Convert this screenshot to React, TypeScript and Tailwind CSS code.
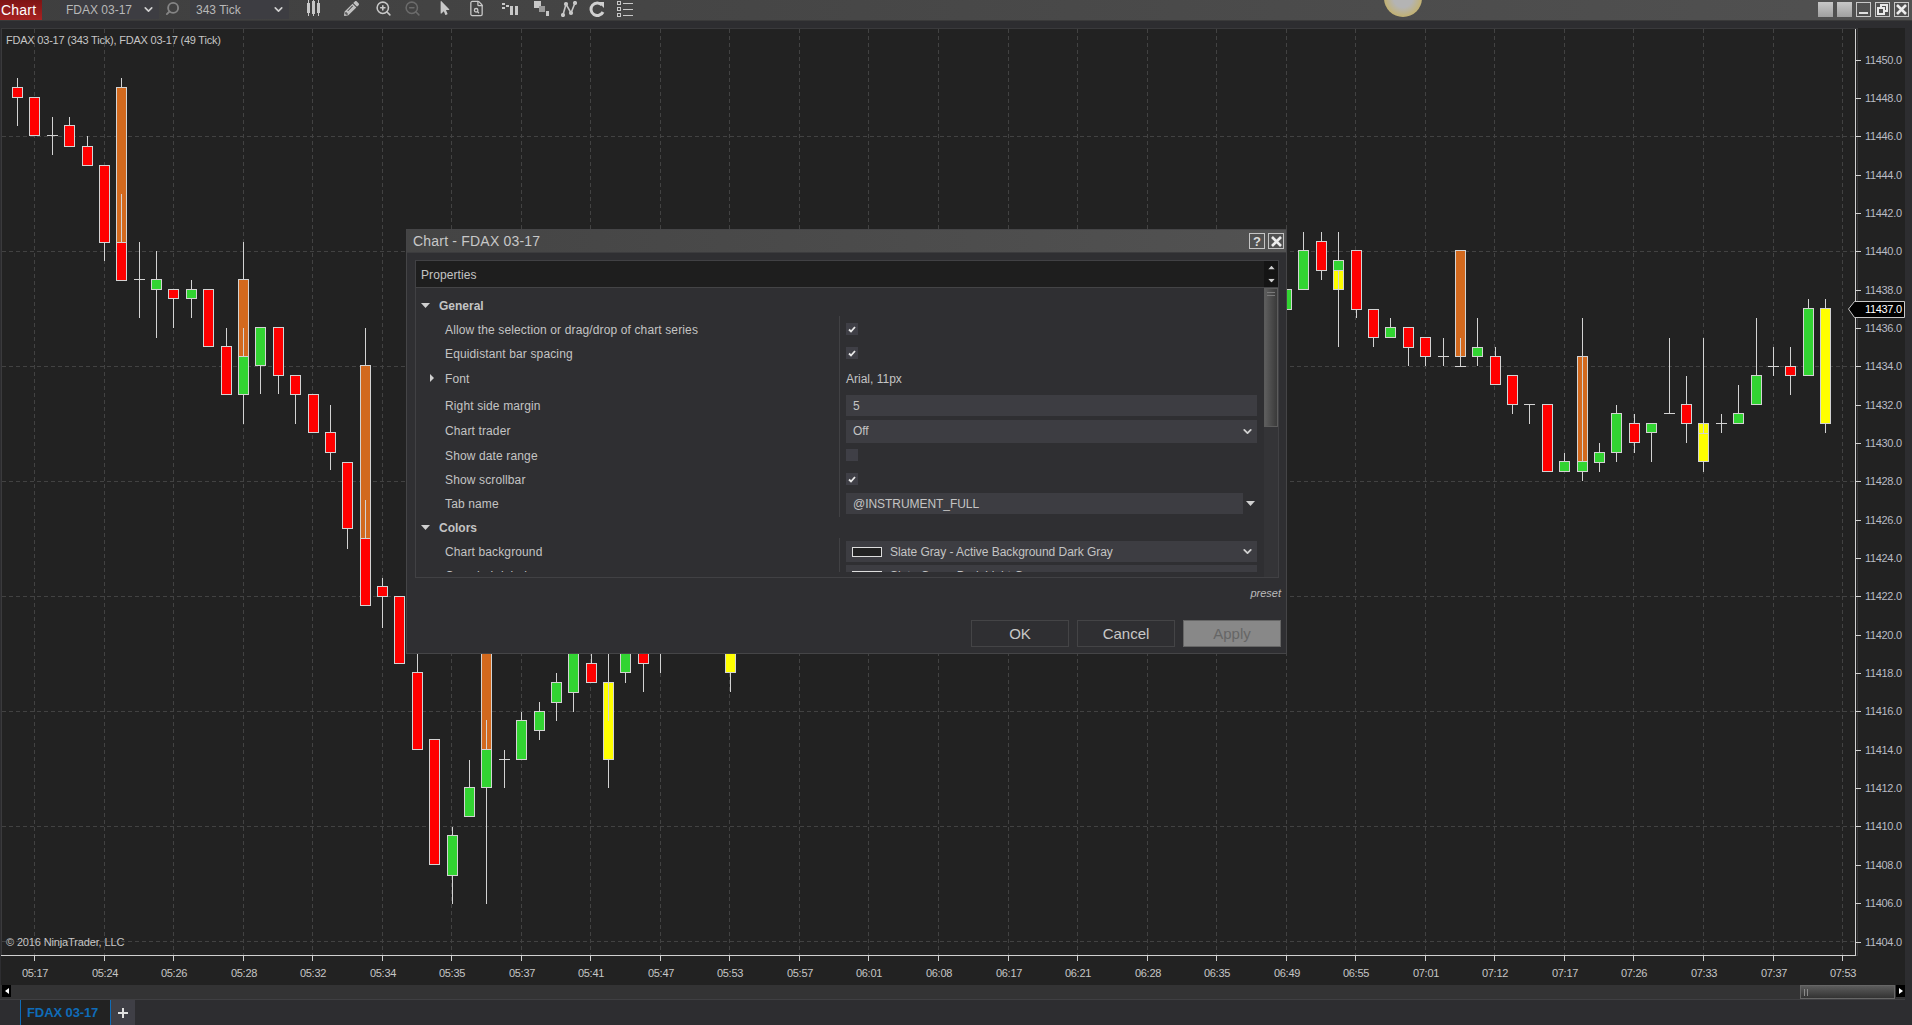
import { ReactNode } from 'react'
import { ChevronDown, FileSearch, Search, ZoomIn, ZoomOut } from 'lucide-react'
import { FaMousePointer, FaPencilAlt } from 'react-icons/fa'

const RED = '#ff0000'
const GREEN = '#32d432'
const ORANGE = '#d2691e'
const YELLOW = '#ffff00'

// n, wick top, wick bottom, body top, body bottom, colour (no colour: only a wick or a doji)
type Bar = [number, number, number, number, number, string?]

const bars: Bar[] = [
  [0, 78, 126, 87, 97, RED],
  [1, 97, 135, 97, 135, RED],
  [2, 117, 155, 135, 135],
  [3, 117, 146, 125, 146, RED],
  [4, 136, 165, 146, 165, RED],
  [5, 165, 261, 165, 242, RED],
  [6, 78, 242, 87, 242, ORANGE],
  [6, 194, 280, 242, 280, RED],
  [7, 242, 318, 279, 279],
  [8, 251, 338, 279, 289, GREEN],
  [9, 289, 328, 289, 298, RED],
  [10, 280, 318, 289, 298, GREEN],
  [11, 289, 346, 289, 346, RED],
  [12, 328, 394, 346, 394, RED],
  [13, 242, 356, 279, 356, ORANGE],
  [13, 328, 424, 356, 394, GREEN],
  [14, 327, 394, 327, 365, GREEN],
  [15, 327, 394, 327, 375, RED],
  [16, 375, 424, 375, 394, RED],
  [17, 394, 432, 394, 432, RED],
  [18, 405, 470, 432, 452, RED],
  [19, 462, 549, 462, 528, RED],
  [20, 328, 538, 365, 538, ORANGE],
  [20, 500, 605, 538, 605, RED],
  [21, 578, 628, 586, 596, RED],
  [22, 596, 663, 596, 663, RED],
  [23, 640, 749, 672, 749, RED],
  [24, 739, 864, 739, 864, RED],
  [25, 827, 904, 835, 875, GREEN],
  [26, 760, 816, 787, 816, GREEN],
  [27, 640, 749, 640, 749, ORANGE],
  [27, 720, 904, 749, 787, GREEN],
  [28, 750, 788, 759, 759],
  [29, 712, 759, 720, 759, GREEN],
  [30, 702, 740, 711, 730, GREEN],
  [31, 673, 721, 682, 702, GREEN],
  [32, 640, 712, 640, 692, GREEN],
  [33, 640, 682, 663, 682, RED],
  [34, 682, 788, 682, 759, YELLOW],
  [34, 640, 721, 640, 640],
  [35, 640, 683, 640, 672, GREEN],
  [36, 640, 692, 640, 663, RED],
  [37, 640, 673, 640, 640],
  [41, 640, 692, 640, 672, YELLOW],
  [73, 289, 309, 289, 309, GREEN],
  [74, 232, 289, 250, 289, GREEN],
  [75, 232, 280, 241, 270, RED],
  [76, 270, 289, 270, 289, YELLOW],
  [76, 232, 347, 260, 270, GREEN],
  [77, 250, 318, 250, 309, RED],
  [78, 309, 347, 309, 337, RED],
  [79, 318, 337, 327, 337, GREEN],
  [80, 327, 366, 327, 347, RED],
  [81, 337, 366, 337, 356, RED],
  [82, 338, 366, 356, 356],
  [83, 250, 356, 250, 356, ORANGE],
  [83, 338, 366, 366, 366],
  [84, 318, 366, 347, 356, GREEN],
  [85, 347, 384, 356, 384, RED],
  [86, 375, 414, 375, 404, RED],
  [87, 404, 424, 404, 404],
  [88, 404, 471, 404, 471, RED],
  [89, 453, 471, 461, 471, GREEN],
  [90, 356, 461, 356, 461, ORANGE],
  [90, 318, 481, 461, 471, GREEN],
  [91, 443, 472, 452, 462, GREEN],
  [92, 405, 462, 413, 452, GREEN],
  [93, 414, 453, 423, 442, RED],
  [94, 423, 462, 423, 432, GREEN],
  [95, 338, 413, 413, 413],
  [96, 376, 443, 404, 423, RED],
  [97, 423, 472, 423, 461, YELLOW],
  [97, 338, 433, 433, 433],
  [98, 414, 433, 423, 423],
  [99, 385, 423, 413, 423, GREEN],
  [100, 318, 404, 375, 404, GREEN],
  [101, 347, 376, 366, 366],
  [102, 347, 395, 366, 375, RED],
  [103, 299, 375, 308, 375, GREEN],
  [104, 299, 433, 308, 423, YELLOW],
]

const times = [
  '05:17', '05:24', '05:26', '05:28', '05:32', '05:34', '05:35', '05:37', '05:41',
  '05:47', '05:53', '05:57', '06:01', '06:08', '06:17', '06:21', '06:28', '06:35',
  '06:49', '06:55', '07:01', '07:12', '07:17', '07:26', '07:33', '07:37', '07:53',
]

const prices = Array.from({ length: 24 }, (_, i) => 11450 - i * 2)
const gridY = [136, 251, 366, 481, 596, 711, 826, 941]

const barX = (n: number) => Math.round(17 + 17.385 * n)
const timeX = (i: number) => Math.round(34 + 69.54 * i)
const priceY = (p: number) => Math.round(941.5 - (p - 11404) * 19.17)

function Chart() {
  return (
    <svg viewBox="0 28 1905 957" className="block h-[957px] w-[1905px] shrink-0" shapeRendering="crispEdges">
      <rect x="1" y="28" width="1904" height="957" fill="#222222" />
      <rect x="1.5" y="28.5" width="1856" height="927" fill="none" stroke="#3a3a3c" />
      {times.map((_, i) => (
        <line key={i} x1={timeX(i) + 0.5} x2={timeX(i) + 0.5} y1="29" y2="955" stroke="#424242" strokeDasharray="4 3" />
      ))}
      {gridY.map((y) => (
        <line key={y} x1="2" x2="1855" y1={y + 0.5} y2={y + 0.5} stroke="#424242" strokeDasharray="4 3" />
      ))}

      {bars.map(([n, wickTop, wickBot, bodyTop, bodyBot, color], i) => {
        const x = barX(n)
        return (
          <g key={i}>
            <line x1={x + 0.5} x2={x + 0.5} y1={wickTop} y2={wickBot} stroke="#d3d3d3" />
            {color ? (
              <rect x={x - 4.5} y={bodyTop + 0.5} width="10" height={bodyBot - bodyTop} fill={color} stroke="#d3d3d3" />
            ) : (
              <line x1={x - 5} x2={x + 6} y1={bodyTop + 0.5} y2={bodyTop + 0.5} stroke="#d3d3d3" />
            )}
          </g>
        )
      })}

      <line x1="1855.5" x2="1855.5" y1="29" y2="955" stroke="#d0d0d0" />
      <line x1="1" x2="1856" y1="955.5" y2="955.5" stroke="#d0d0d0" />
      {times.map((t, i) => (
        <g key={t}>
          <line x1={timeX(i) + 0.5} x2={timeX(i) + 0.5} y1="956" y2="961" stroke="#d0d0d0" />
          <text x={timeX(i) + 1} y="977" textAnchor="middle" className="fill-[#c6c6c6] text-[11px] tracking-[-0.3px]">{t}</text>
        </g>
      ))}
      {prices.map((p) => (
        <g key={p}>
          <line x1="1856" x2="1861" y1={priceY(p) + 0.5} y2={priceY(p) + 0.5} stroke="#d0d0d0" />
          <text x="1865" y={priceY(p) + 4} textLength="37" className="fill-[#b9bcc4] text-[11px]">{p}.0</text>
        </g>
      ))}

      <polygon points="1848.5,309 1854.5,301.5 1904.5,301.5 1904.5,317.5 1854.5,317.5" fill="#000000" stroke="#c8c8c8" shapeRendering="auto" />
      <text x="1865" y="313" textLength="37" className="fill-white text-[11px]">11437.0</text>

      <text x="6" y="44" className="fill-[#c6c6c6] text-[11px] tracking-[-0.21px]">FDAX 03-17 (343 Tick), FDAX 03-17 (49 Tick)</text>
      <text x="6" y="946" className="fill-[#c6c6c6] text-[11px] tracking-[-0.14px]">© 2016 NinjaTrader, LLC</text>
    </svg>
  )
}

function Dropdown({ label, w }: { label: string; w: string }) {
  return (
    <div className={`flex h-[19px] items-center justify-between bg-[#3d3d42] pl-[6px] pr-[4px] text-[12px] text-[#b8b8b8] ${w}`}>
      <span>{label}</span>
      <ChevronDown size={13} strokeWidth={3} className="text-[#d0d0d0]" />
    </div>
  )
}

function Toolbar() {
  return (
    <div className="relative flex h-[21px] shrink-0 items-start border-b border-[#3a3a3a] bg-gradient-to-r from-[#3f3f3f] to-[#515151]">
      <div className="flex h-[20px] w-[42px] items-center bg-gradient-to-b from-[#7e1414] to-[#a82222] pl-px text-[14px] tracking-[0.2px] text-white">Chart</div>
      <div className="ml-[18px]"><Dropdown label="FDAX 03-17" w="w-[99px]" /></div>
      <Search size={15} strokeWidth={3} className="ml-[6px] mt-px -scale-x-100 text-[#858585]" />
      <div className="ml-[10px]"><Dropdown label="343 Tick" w="w-[99px]" /></div>

      <svg viewBox="0 0 14 16" className="ml-[18px] h-[16px] w-[14px]" fill="#c8c8c8" shapeRendering="crispEdges">
        <rect x="1" y="0" width="1" height="16" />
        <rect x="0" y="3" width="3" height="10" />
        <rect x="6" y="0" width="1" height="16" />
        <rect x="5" y="1" width="3" height="13" />
        <rect x="11" y="0" width="1" height="16" />
        <rect x="10" y="3" width="3" height="10" />
      </svg>
      <FaPencilAlt size={15} className="ml-[23px] mt-px text-[#c0c0c0]" />
      <ZoomIn size={17} strokeWidth={2.2} className="ml-[16px] text-[#c8c8c8]" />
      <ZoomOut size={17} strokeWidth={2.2} className="ml-[12px] text-[#6b6b6b]" />
      <FaMousePointer size={14} className="ml-[17px] mt-px text-[#c8c8c8]" />
      <FileSearch size={17} strokeWidth={1.8} className="ml-[16px] text-[#c8c8c8]" />

      <svg viewBox="0 0 16 16" className="ml-[17px] mt-px h-[16px] w-[16px]" fill="#c8c8c8" shapeRendering="crispEdges">
        <rect x="0" y="2" width="3" height="2" />
        <rect x="4" y="4" width="3" height="2" />
        <rect x="0" y="6" width="3" height="2" />
        <rect x="8" y="5" width="3" height="9" />
        <rect x="13" y="5" width="3" height="9" />
      </svg>
      <svg viewBox="0 0 16 16" className="ml-[16px] mt-px h-[16px] w-[16px]" fill="#c8c8c8" shapeRendering="crispEdges">
        <rect x="0" y="0" width="7" height="7" />
        <rect x="5" y="5" width="6" height="6" fill="#9a9a9a" />
        <rect x="12" y="10" width="3" height="5" />
      </svg>
      <svg viewBox="0 0 16 16" className="ml-[11px] mt-px h-[16px] w-[16px]" fill="none" stroke="#c8c8c8" strokeWidth="1.6">
        <path d="M2 14 L5 3 L10 12 L14 2" />
        <circle cx="2" cy="14" r="1.3" fill="#c8c8c8" />
        <circle cx="5" cy="3" r="1.3" fill="#c8c8c8" />
        <circle cx="10" cy="12" r="1.3" fill="#c8c8c8" />
        <circle cx="14" cy="2" r="1.3" fill="#c8c8c8" />
      </svg>
      <svg viewBox="0 0 16 16" className="ml-[12px] mt-px h-[16px] w-[16px]" fill="none" stroke="#d0d0d0" strokeWidth="3">
        <path d="M13 4 A6.3 6.3 0 1 0 14 11" />
        <path d="M9 1 L15 1 L15 7 Z" fill="#d0d0d0" stroke="none" />
      </svg>
      <svg viewBox="0 0 16 16" className="ml-[12px] mt-px h-[16px] w-[16px]" fill="none" stroke="#c8c8c8" shapeRendering="crispEdges">
        <rect x="0.5" y="0.5" width="3" height="3" />
        <rect x="0.5" y="6.5" width="3" height="3" />
        <rect x="0.5" y="12.5" width="3" height="3" />
        <path d="M6 2.5 H16 M6 8.5 H16 M6 14.5 H16" strokeWidth="1.5" />
      </svg>

      <div className="ml-auto mr-[3px] mt-[2px] flex gap-[4px]">
        <div className="h-[15px] w-[15px] bg-gradient-to-b from-[#c8c8c8] to-[#a0a0a0]" />
        <div className="h-[15px] w-[15px] bg-gradient-to-b from-[#c8c8c8] to-[#a0a0a0]" />
        <div className="flex h-[15px] w-[15px] items-end justify-center border border-[#c8c8c8] pb-[2px]">
          <div className="h-[2px] w-[9px] bg-[#e0e0e0]" />
        </div>
        <div className="flex h-[15px] w-[15px] items-center justify-center border border-[#c8c8c8]">
          <svg viewBox="0 0 11 11" className="h-[11px] w-[11px]" fill="none" stroke="#e8e8e8" strokeWidth="1.5" shapeRendering="crispEdges">
            <rect x="4" y="1" width="6" height="6" />
            <rect x="1" y="4" width="6" height="6" fill="#4e4e4e" />
          </svg>
        </div>
        <div className="flex h-[15px] w-[15px] items-center justify-center border border-[#c8c8c8]">
          <svg viewBox="0 0 11 11" className="h-[11px] w-[11px]" stroke="#ececec" strokeWidth="2.6">
            <path d="M1 1 L10 10 M10 1 L1 10" />
          </svg>
        </div>
      </div>

      {/* cursor highlight */}
      <div className="absolute left-[1384px] top-[-21px] h-[38px] w-[38px] rounded-full bg-[radial-gradient(circle,#b4b4b4_35%,#c2b274_70%,#c9a83a_100%)]" />
    </div>
  )
}

function Triangle({ dir, className = '' }: { dir: 'down' | 'right' | 'up'; className?: string }) {
  const points = { down: '0,0 9,0 4.5,5', right: '0,0 4,4 0,8', up: '0,5 9,5 4.5,0' }[dir]
  const box = dir === 'right' ? 'h-[8px] w-[4px]' : 'h-[5px] w-[9px]'
  return (
    <svg viewBox={dir === 'right' ? '0 0 4 8' : '0 0 9 5'} className={`${box} ${className}`} fill="#d0d0d0">
      <polygon points={points} />
    </svg>
  )
}

function Check({ on = true }: { on?: boolean }) {
  return (
    <div className="mb-[2px] flex h-[12px] w-[12px] items-center justify-center bg-[#3f3f46]">
      {on && (
        <svg viewBox="0 0 8 7" className="h-[7px] w-[8px]" fill="none" stroke="#e8e8e8" strokeWidth="1.8">
          <path d="M1 3.5 L3 5.5 L7 1" />
        </svg>
      )}
    </div>
  )
}

function Box({ children, arrow = false, h = 'h-[21px]' }: { children: ReactNode; arrow?: boolean; h?: string }) {
  return (
    <div className={`flex w-full items-center justify-between bg-[#3d3d42] pl-[7px] pr-[3px] ${h}`}>
      <span className="flex items-center tracking-[-0.05px]">{children}</span>
      {arrow && <ChevronDown size={13} strokeWidth={3.4} className="text-[#d0d0d0]" />}
    </div>
  )
}

function Swatch() {
  return <span className="mr-[8px] -ml-px block h-[10px] w-[30px] border border-[#dddddd] bg-[#222222]" />
}

function Row({ label, h, font = false, className = '', children }: { label: string; h: string; font?: boolean; className?: string; children?: ReactNode }) {
  return (
    <div className={`flex items-center ${h} ${className}`}>
      <div className="relative w-[424px] shrink-0 pl-[29px] tracking-[0.13px]">
        {font && <Triangle dir="right" className="absolute left-[14px] top-[4px]" />}
        {label}
      </div>
      <div className="flex-1 pl-[6px] pr-[7px]">{children}</div>
    </div>
  )
}

function Section({ label, h }: { label: string; h: string }) {
  return (
    <div className={`flex items-center gap-[9px] pl-[5px] font-bold ${h}`}>
      <Triangle dir="down" className="-mt-px" />
      {label}
    </div>
  )
}

function Divider({ top }: { top: string }) {
  return <div className={`absolute bottom-[-2px] left-[423px] w-px bg-[#414144] ${top}`} />
}

function DialogButton({ label, muted = false }: { label: string; muted?: boolean }) {
  return (
    <div
      className={`flex h-[27px] w-[98px] items-center justify-center border pt-px text-[15px] ${
        muted ? 'border-[#666666] bg-[#888888] text-[#666666]' : 'border-[#444446] text-[#c8c8c8]'
      }`}
    >
      {label}
    </div>
  )
}

function Dialog() {
  return (
    <div className="absolute left-[406px] top-[229px] flex h-[425px] w-[881px] flex-col border border-[#454547] bg-[#2f2f32] text-[12px] text-[#c4c4c4]">
      <div className="flex h-[23px] shrink-0 items-center justify-between border-b border-[#3c3c3e] bg-gradient-to-r from-[#444444] to-[#525252] pl-[6px] pr-[2px] text-[14px] tracking-[0.2px] text-[#c8c8c8]">
        <span>Chart - FDAX 03-17</span>
        <div className="flex gap-[3px]">
          <div className="flex h-[16px] w-[16px] items-center justify-center border border-[#c4c4c4] text-[13px] font-bold leading-none text-[#dcdcdc]">?</div>
          <div className="flex h-[16px] w-[16px] items-center justify-center border border-[#c4c4c4]">
            <svg viewBox="0 0 11 11" className="h-[11px] w-[11px]" stroke="#ececec" strokeWidth="2.6">
              <path d="M1 1 L10 10 M10 1 L1 10" />
            </svg>
          </div>
        </div>
      </div>

      <div className="ml-[8px] mt-[7px] flex h-[318px] w-[864px] shrink-0 flex-col border border-[#414144]">
        <div className="flex h-[27px] shrink-0 items-center justify-between border-b border-[#444446] bg-[#1e1e1e] pl-[5px]">
          <span className="pt-[2px] tracking-[0.1px]">Properties</span>
          <div className="flex h-full w-[14px] flex-col items-center justify-center gap-[8px] bg-[#141414]">
            <Triangle dir="up" className="scale-75" />
            <Triangle dir="down" className="scale-75" />
          </div>
        </div>
        <div className="flex min-h-0 flex-1">
          <div className="h-[284px] flex-1 overflow-hidden pt-[6px]">
            <Section label="General" h="h-[24px]" />
            <div className="relative">
              <Divider top="top-[-2px]" />
              <Row label="Allow the selection or drag/drop of chart series" h="h-[24px]"><Check /></Row>
              <Row label="Equidistant bar spacing" h="h-[24px]"><Check /></Row>
              <Row label="Font" h="h-[26px]" font><span className="pt-[2px]">Arial, 11px</span></Row>
              <Row label="Right side margin" h="h-[27px]"><Box>5</Box></Row>
              <Row label="Chart trader" h="h-[24px]"><Box arrow h="h-[23px]">Off</Box></Row>
              <Row label="Show date range" h="h-[25px]"><Check on={false} /></Row>
              <Row label="Show scrollbar" h="h-[24px]"><Check /></Row>
              <Row label="Tab name" h="h-[23px]">
                <div className="flex items-center">
                  <div className="w-[397px] shrink-0"><Box>@INSTRUMENT_FULL</Box></div>
                  <Triangle dir="down" className="ml-[3px]" />
                </div>
              </Row>
            </div>
            <Section label="Colors" h="h-[26px]" />
            <div className="relative">
              <Divider top="top-[-3px]" />
              <Row label="Chart background" h="h-[21px]" className="mb-[3px]">
                <Box arrow><Swatch />Slate Gray - Active Background Dark Gray</Box>
              </Row>
              <Row label="Crosshair label" h="h-[21px]">
                <Box arrow><Swatch />Slate Gray - Dark Light Gray</Box>
              </Row>
            </div>
          </div>
          <div className="relative w-[14px] shrink-0 bg-[#343437]">
            <div className="flex h-[139px] w-[14px] justify-center border border-[#5c5c5c] bg-gradient-to-r from-[#5e5e5e] to-[#3a3a3a] pt-[3px]">
              <div className="h-[4px] w-[8px] border-y border-[#7a7a7a]" />
            </div>
          </div>
        </div>
      </div>

      <div className="mr-[5px] mt-[9px] text-right text-[11px] italic leading-[13px] text-[#bbbbbb]">preset</div>
      <div className="mr-[5px] mt-[20px] flex justify-end gap-[8px]">
        <DialogButton label="OK" />
        <DialogButton label="Cancel" />
        <DialogButton label="Apply" muted />
      </div>
    </div>
  )
}

function ScrollStrip() {
  return (
    <div className="flex h-[15px] w-[1905px] shrink-0 items-start justify-between border-b border-[#3f3f42] bg-[#333334] pl-[2px]">
      <div className="flex h-[12px] w-[9px] items-center justify-center bg-black">
        <svg viewBox="0 0 4 6" className="h-[6px] w-[4px]" fill="#ffffff"><polygon points="4,0 0,3 4,6" /></svg>
      </div>
      <div className="flex items-start gap-[1px]">
        <div className="flex h-[14px] w-[95px] items-center gap-[2px] border border-[#666666] bg-gradient-to-b from-[#5c5c5c] to-[#333333] pl-[3px]">
          <div className="h-[7px] w-px bg-[#8a8a8a]" />
          <div className="h-[7px] w-px bg-[#8a8a8a]" />
        </div>
        <div className="flex h-[12px] w-[9px] items-center justify-center bg-black">
          <svg viewBox="0 0 4 6" className="h-[6px] w-[4px]" fill="#ffffff"><polygon points="0,0 4,3 0,6" /></svg>
        </div>
      </div>
    </div>
  )
}

function TabBar() {
  return (
    <div className="flex h-[25px] shrink-0 items-stretch pl-[20px]">
      <div className="flex w-[91px] items-center border-x border-[#0f6cb8] bg-[#222222] pl-[6px] text-[13px] font-bold tracking-[-0.1px] text-[#0f6cb8]">FDAX 03-17</div>
      <div className="flex w-[24px] items-center justify-center bg-[#3f3f46]">
        <svg viewBox="0 0 10 10" className="h-[10px] w-[10px]" stroke="#e0e0e0" strokeWidth="2" shapeRendering="crispEdges">
          <path d="M5 0 V10 M0 5 H10" />
        </svg>
      </div>
    </div>
  )
}

export default function App() {
  return (
    <div className="relative flex h-[1025px] w-[1912px] flex-col overflow-hidden bg-[#2d2d30] font-['Liberation_Sans',Arial,sans-serif]">
      <Toolbar />
      <div className="h-[7px] shrink-0" />
      <Chart />
      <ScrollStrip />
      <TabBar />
      <Dialog />
    </div>
  )
}
